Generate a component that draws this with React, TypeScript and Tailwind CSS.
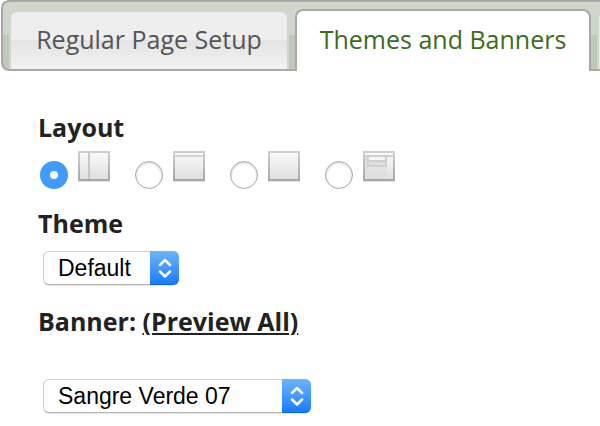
import React, { useState } from "react";

type LayoutName = "sidebar" | "header" | "blank" | "boxed";

const layouts: { id: LayoutName; label: string }[] = [
  { id: "sidebar", label: "Sidebar layout" },
  { id: "header", label: "Header layout" },
  { id: "blank", label: "Blank layout" },
  { id: "boxed", label: "Boxed layout" },
];

const LayoutIcon = ({ name }: { name: LayoutName }) => (
  <svg width="32" height="31" viewBox="0 0 32 31" aria-hidden="true">
    <defs>
      <linearGradient id={`fill-${name}`} x1="0" y1="0" x2="0" y2="1">
        <stop offset="0" stopColor="#fafafa" />
        <stop offset="1" stopColor="#dedede" />
      </linearGradient>
      <linearGradient id={`edge-${name}`} x1="0" y1="0" x2="0" y2="1">
        <stop offset="0" stopColor="#d0d0d0" />
        <stop offset="1" stopColor="#a6a6a6" />
      </linearGradient>
    </defs>
    <rect width="32" height="30" fill={`url(#edge-${name})`} />
    <rect x="2" y="2" width="28" height="26" fill={`url(#fill-${name})`} />
    <path d="M0 30.5h32" stroke="#e2e2e2" />
    {name === "sidebar" && <path d="M11 2v26" stroke="#c6c6c6" strokeWidth="2" />}
    {name === "header" && <path d="M2 5h28" stroke="#d3d3d3" strokeWidth="2" />}
    {name === "boxed" && (
      <>
        <rect x="2" y="6" width="3" height="22" fill="#dedede" />
        <rect x="5" y="16" width="19" height="12" fill="#dedede" fillOpacity="0.5" />
        <path d="M2 5h28" stroke="#cfcfcf" strokeWidth="2" />
        <path d="M5 6v9h18V6M5 10h18" fill="none" stroke="#cfcfcf" strokeWidth="2" />
        <rect x="6" y="11" width="16" height="3" fill="#dedede" />
      </>
    )}
  </svg>
);

type SelectProps = {
  id: string;
  label: string;
  options: string[];
  className: string;
};

const Select = ({ id, label, options, className }: SelectProps) => (
  <div className={`relative h-[34px] max-w-full ${className}`}>
    <select
      id={id}
      aria-label={label}
      className="block h-full w-full appearance-none rounded-md border border-[#cfcfcf] border-b-[#b5b5b5] bg-white pl-[14px] pr-8 font-['Liberation_Sans',Arial,sans-serif] text-[23px] leading-8 font-normal text-black shadow-[0_1px_1px_#0000001a]"
    >
      {options.map((option) => (
        <option key={option}>{option}</option>
      ))}
    </select>
    <span className="pointer-events-none absolute inset-y-0 right-0 flex w-[29px] items-center justify-center rounded-r-md border-b border-[#0f66e6] bg-linear-to-b from-[#6cb3fa] to-[#147cfe]">
      <svg width="14" height="20" viewBox="0 0 14 20" fill="none" stroke="white" strokeWidth="2.5" strokeLinecap="round" strokeLinejoin="round">
        <path d="M2 7l5-5 5 5M2 13.500l5 5 5-5" />
      </svg>
    </span>
  </div>
);

const App = () => {
  const [layout, setLayout] = useState<LayoutName>("sidebar");

  return (
    <div className="overflow-hidden bg-white pb-3 font-['Trebuchet_MS','Open_Sans',sans-serif] text-[25px] text-[#222]">
      <nav className="ml-px flex h-[71px] rounded-l-lg border-2 border-r-0 border-[#a8a8a8] bg-linear-to-b from-[#cfd7ca] from-50% to-[#bccab7] to-50% pl-1.5">
        <button
          type="button"
          className="mt-2 w-[280px] shrink-0 rounded-t-lg border-2 border-b-0 border-[#d3d3d3] bg-linear-to-b from-[#eeeeee] from-50% via-[#e4e4e4] via-50% to-[#f2f2f2] pb-0.5 font-medium text-[#555]"
        >
          Regular Page Setup
        </button>
        <button
          type="button"
          aria-current="page"
          className="-mb-0.5 ml-1.5 mt-[7px] w-[296px] shrink-0 rounded-t-lg border-2 border-b-0 border-[#a8a8a8] bg-white pb-0.5 font-medium text-[#3d6b1a]"
        >
          Themes and Banners
        </button>
        <button
          type="button"
          aria-label="More page settings"
          className="ml-1.5 mt-2 w-[280px] shrink-0 rounded-t-lg border-2 border-b-0 border-[#d3d3d3] bg-[#ececec]"
        />
      </nav>

      <main className="px-[38px] pt-10 font-bold">
        <fieldset>
          <legend className="leading-8">Layout</legend>
          <div className="mt-2 flex h-[38px] gap-[25px] pl-0.5">
            {layouts.map(({ id, label }) => (
              <label key={id} className="flex shrink-0 gap-2.5">
                <input
                  type="radio"
                  name="layout"
                  aria-label={label}
                  checked={layout === id}
                  onChange={() => setLayout(id)}
                  className="mt-2.5 size-7 appearance-none rounded-full border border-[#a9a9a9] bg-white shadow-[inset_0_1px_3px_#00000033] checked:border-10 checked:border-[#409bfa] checked:shadow-none"
                />
                <LayoutIcon name={id} />
              </label>
            ))}
          </div>
        </fieldset>

        <h2 className="mt-[18px] leading-8">Theme</h2>
        <div className="mt-3 pl-[5px]">
          <Select id="theme" label="Theme" options={["Default"]} className="w-[136px]" />
        </div>

        <h2 className="mt-5 leading-8">
          Banner:{" "}
          <a href="#preview" className="underline decoration-2 underline-offset-2">
            (Preview All)
          </a>
        </h2>
        <div className="mt-[42px] pl-[5px]">
          <Select id="banner" label="Banner" options={["Sangre Verde 07"]} className="w-[268px]" />
        </div>
      </main>
    </div>
  );
};

export default App;
